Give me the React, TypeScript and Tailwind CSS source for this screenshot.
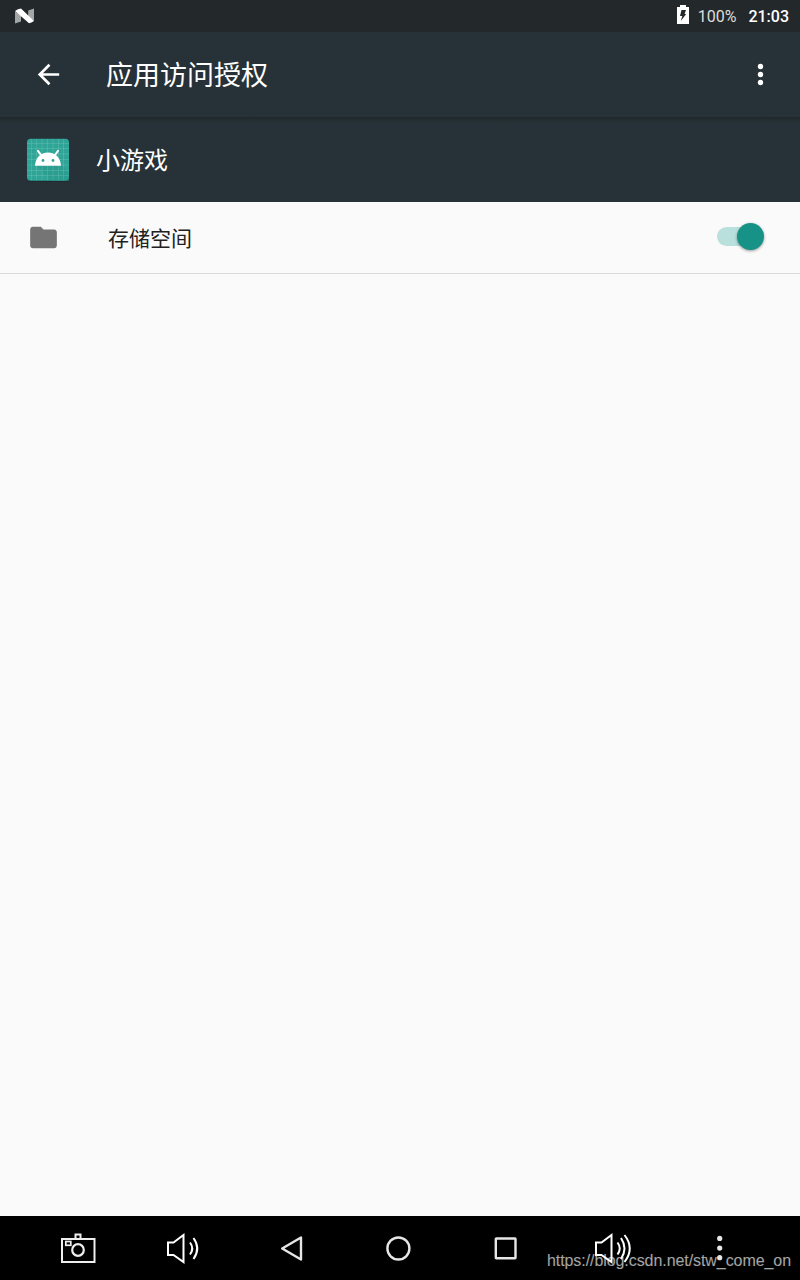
import type { ReactNode } from 'react';

interface NavIconProps {
  label: string;
  children: ReactNode;
}

const NavIcon = ({ label, children }: NavIconProps) => {
  return (
    <button aria-label={label} className="flex w-[107px] h-16 items-center justify-center">
      <svg width="41" height="40" viewBox="0 0 41 40" fill="none" stroke="#fff" strokeWidth="2">
        {children}
      </svg>
    </button>
  );
};

const StatusBar = () => {
  return (
    <div className="flex h-8 items-center justify-between bg-[#23282b] pl-[15px] pr-[11px] text-white">
      <svg width="20" height="16" viewBox="0 0 20 16">
        <path d="M0 3.5 6 7.5V13.5L0 15.5z" fill="#a3a6a7" />
        <path d="M13.2 2.5 19 .5V13L13.2 9z" fill="#a3a6a7" />
        <path d="M0 3Q3 .8 6 .6L19 13q-2.5 2-5 2.3z" fill="#fff" />
      </svg>
      <div className="flex items-center">
        <svg width="12" height="20" viewBox="0 0 12 20" className="mr-[9px] -mt-[2px]">
          <path d="M3 0h6v2h3v17H0V2h3z" fill="#fff" />
          <path d="M4.5 5h4.5L7.6 9H9.2L3.8 16 5.3 11H3z" fill="#23282b" />
        </svg>
        <span className="mr-3 pt-[2px] text-base leading-[30px] text-[#dcdddd]">100%</span>
        <span className="pt-[2px] text-base leading-[30px] font-medium">21:03</span>
      </div>
    </div>
  );
};

const Toolbar = () => {
  return (
    <header className="flex h-[85px] items-center bg-[#273238] pl-8 pr-6 text-white">
      <button aria-label="返回">
        <svg width="33" height="32" viewBox="-.375 .375 24.75 24" fill="currentColor">
          <path d="M20 11H7.83l5.59-5.59L12 4l-8 8 8 8 1.41-1.41L7.83 13H20v-2z" />
        </svg>
      </button>
      <h1 className="ml-[41px] pt-[3px] text-[27px] leading-8">应用访问授权</h1>
      <button aria-label="更多" className="ml-auto">
        <svg width="32" height="32" viewBox="-.375 .375 24 24" fill="currentColor">
          <circle cx="12" cy="6" r="2" />
          <circle cx="12" cy="12" r="2" />
          <circle cx="12" cy="18" r="2" />
        </svg>
      </button>
    </header>
  );
};

const gridLines = [5, 10, 15.5, 21, 26.5, 32, 37];

const AppIcon = () => {
  return (
    <svg width="44" height="44" viewBox="0 0 44 44">
      <rect x="1" y="1.5" width="42" height="42" rx="3.5" fill="#1b2327" />
      <rect x="1" y="0.7" width="42" height="42" rx="3.5" fill="#2fa597" />
      <path d="M9.5 26.5h25.5l8 8v8.2H25.5z" fill="#26988a" opacity=".5" />
      {gridLines.map((p) => (
        <path key={p} d={`M${p + 0.5} 1v41.5M1 ${p + 0.5}h42`} stroke="#fff" strokeWidth=".8" opacity=".15" />
      ))}
      <path d="M9 27.7c.4-8 5.8-13.2 13-13.2s12.6 5.2 13 13.2z" fill="#fff" />
      <path d="m15 17-3-4.2M29 17l3-4.2" stroke="#fff" strokeWidth="2" strokeLinecap="round" />
      <circle cx="17" cy="22.5" r="1.4" fill="#2fa597" />
      <circle cx="27" cy="22.5" r="1.4" fill="#2fa597" />
    </svg>
  );
};

const NavigationBar = () => {
  return (
    <nav className="relative flex h-16 bg-black pl-6">
      <NavIcon label="截屏">
        <rect x="5" y="11" width="32.5" height="23" stroke="#eee" strokeWidth="2" />
        <path d="M18.5 10.5V6.500h5v4" stroke="#eee" />
        <rect x="8.8" y="13.5" width="5" height="3.8" stroke="#eee" strokeWidth="1.7" />
        <circle cx="21" cy="22" r="5.8" stroke="#eee" strokeWidth="2.2" />
      </NavIcon>
      <NavIcon label="音量减">
        <path d="M4 14.5h5.5L19.5 7v27L9.5 27H4z" />
        <path d="M26 14.5q4.5 6 0 12M29.5 10q7.5 10.5 0 21" />
      </NavIcon>
      <NavIcon label="后退">
        <path d="M11.2 20.5 30 9.5v22z" stroke="#e6e6e6" strokeWidth="2.4" strokeLinejoin="round" />
      </NavIcon>
      <NavIcon label="主屏幕">
        <circle cx="20.4" cy="20.5" r="11" stroke="#e6e6e6" strokeWidth="2.4" />
      </NavIcon>
      <NavIcon label="最近任务">
        <rect x="10.8" y="10.5" width="19.7" height="19.7" rx=".5" stroke="#e6e6e6" strokeWidth="2.4" />
      </NavIcon>
      <NavIcon label="音量加">
        <path d="M4 14.5h5.5L19.5 7v27L9.5 27H4z" />
        <path d="M25.5 14.5q4.5 6 0 12M29 10q7 10.5 0 21M32.5 7q10.5 13.5 0 27" />
      </NavIcon>
      <NavIcon label="菜单">
        <g fill="#e6e6e6" stroke="none">
          <circle cx="20.7" cy="10.4" r="2.6" />
          <circle cx="20.7" cy="20.1" r="2.6" />
          <circle cx="20.7" cy="29.7" r="2.6" />
        </g>
      </NavIcon>
      <span className="absolute right-[9px] bottom-[9px] text-base leading-5 tracking-[-0.07px] text-white/65 font-['Liberation_Sans',sans-serif]">
        https://blog.csdn.net/stw_come_on
      </span>
    </nav>
  );
};

const App = () => {
  return (
    <div className="flex h-[1280px] w-[800px] flex-col overflow-hidden bg-[#fafafa] font-[Roboto,'Noto_Sans_CJK_SC',sans-serif]">
      <StatusBar />
      <Toolbar />

      {/* App header */}
      <section className="flex h-[85px] items-center bg-linear-to-b from-[#20282d] to-[#273238] to-8% pl-[26px] text-white">
        <AppIcon />
        <h2 className="ml-[26px] pt-[3px] text-2xl leading-8">小游戏</h2>
      </section>

      {/* Permission list */}
      <main className="flex-1">
        <div className="flex h-[72px] items-center border-b border-[#dadada] pl-7 pr-9">
          <svg width="32" height="32" viewBox=".375 .375 24 24" fill="#757575">
            <path d="M10 4H4c-1.1 0-1.99.9-1.99 2L2 18c0 1.1.9 2 2 2h16c1.1 0 2-.9 2-2V8c0-1.1-.9-2-2-2h-8l-2-2z" />
          </svg>
          <span className="ml-12 pt-[3px] text-[21px] leading-8 text-[#212121]">存储空间</span>
          <button role="switch" aria-checked="true" aria-label="存储空间" className="ml-auto mb-0.5 flex h-[27px] w-[47px] items-center">
            <span className="h-[19px] w-9 rounded-full bg-[#b9e0dc]" />
            <span className="-ml-[16.5px] size-[27px] shrink-0 rounded-full bg-[#179286] shadow-[0_1px_3px_rgba(0,0,0,0.4)]" />
          </button>
        </div>
      </main>

      <NavigationBar />
    </div>
  );
};

export default App;
